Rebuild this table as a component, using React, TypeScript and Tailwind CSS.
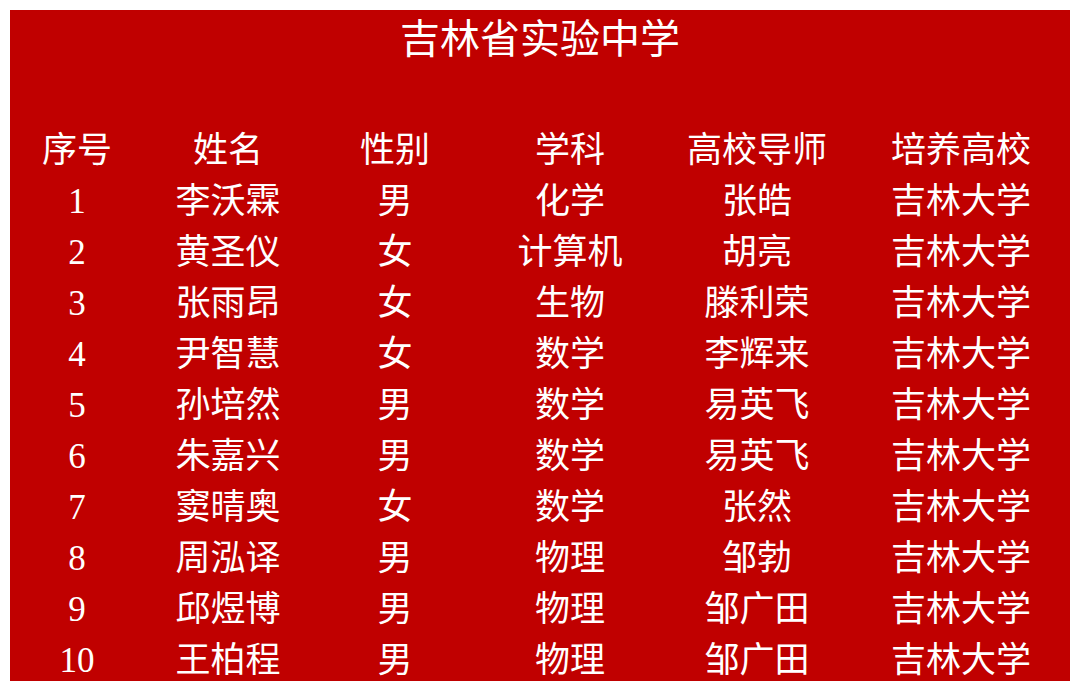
const headers = ["序号", "姓名", "性别", "学科", "高校导师", "培养高校"];

const rows = [
  ["1", "李沃霖", "男", "化学", "张皓", "吉林大学"],
  ["2", "黄圣仪", "女", "计算机", "胡亮", "吉林大学"],
  ["3", "张雨昂", "女", "生物", "滕利荣", "吉林大学"],
  ["4", "尹智慧", "女", "数学", "李辉来", "吉林大学"],
  ["5", "孙培然", "男", "数学", "易英飞", "吉林大学"],
  ["6", "朱嘉兴", "男", "数学", "易英飞", "吉林大学"],
  ["7", "窦晴奥", "女", "数学", "张然", "吉林大学"],
  ["8", "周泓译", "男", "物理", "邹勃", "吉林大学"],
  ["9", "邱煜博", "男", "物理", "邹广田", "吉林大学"],
  ["10", "王柏程", "男", "物理", "邹广田", "吉林大学"],
];

function Row({ cells }: { cells: string[] }) {
  return (
    <div className="grid grid-cols-[134px_168px_166px_184px_190px_218px] h-[51px] leading-[51px]">
      {cells.map((c, i) => (
        <div key={i} className="text-center whitespace-nowrap">
          {c}
        </div>
      ))}
    </div>
  );
}

export default function App() {
  return (
    <div className="w-[1080px] h-[692px] bg-white pt-[10px] pl-[10px] overflow-hidden">
      <div
        className="w-[1060px] h-[671px] bg-[#c00000] text-white"
        style={{ fontFamily: '"Liberation Serif", "Noto Sans CJK SC", serif' }}
      >
        {/* Title */}
        <div className="h-[60px] pt-[10px]">
          <h1 className="h-[40px] leading-[40px] text-[40px] text-center">
            吉林省实验中学
          </h1>
        </div>

        {/* Table */}
        <div className="mt-[55px] text-[35px]">
          <Row cells={headers} />
          {rows.map((r) => (
            <Row key={r[0]} cells={r} />
          ))}
        </div>
      </div>
    </div>
  );
}
